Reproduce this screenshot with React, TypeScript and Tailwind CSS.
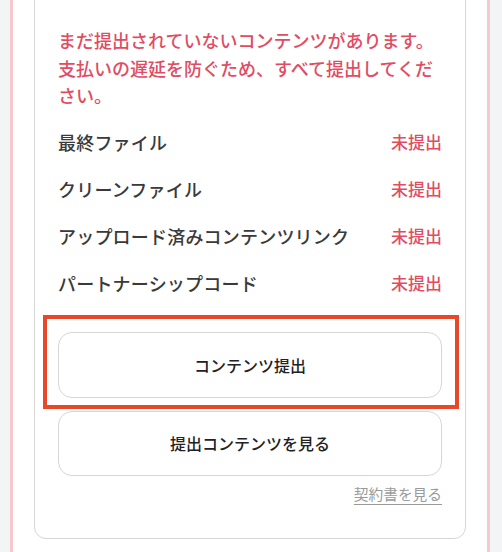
const items = [
  { label: "最終ファイル", status: "未提出" },
  { label: "クリーンファイル", status: "未提出" },
  { label: "アップロード済みコンテンツリンク", status: "未提出" },
  { label: "パートナーシップコード", status: "未提出" },
];

export default function App() {
  return (
    <div
      className="flex h-[552px] overflow-hidden bg-[#f3f4f6] pl-[10px] pr-[12px]"
      style={{ fontFamily: '"Noto Sans CJK JP", "Noto Sans", sans-serif' }}
    >
      <div className="flex w-full flex-col border-x-[3px] border-[#f5c9cd] bg-white px-[21px]">
        <div className="-mt-[20px] rounded-[12px] border border-[#d6d6d6] px-[23px] pt-[46px] pb-[33px]">
          <p className="text-[18px] leading-[27.5px] font-medium text-[#e14c62]">
            まだ提出されていないコンテンツがあります。支払いの遅延を防ぐため、すべて提出してください。
          </p>

          <ul className="mt-[9px]">
            {items.map((item) => (
              <li key={item.label} className="flex h-[47px] items-center justify-between">
                <span className="text-[18px] tracking-[0.2px] font-medium text-[#3a3a3a]">{item.label}</span>
                <span className="text-[17px] font-medium text-[#e14c62]">{item.status}</span>
              </li>
            ))}
          </ul>

          <div className="relative mt-[25px] flex flex-col gap-[13px]">
            <button className="h-[66px] rounded-[14px] border border-[#d6d6d6] bg-white text-[16px] font-medium text-[#222]">
              コンテンツ提出
            </button>
            <div className="pointer-events-none absolute top-[-17px] left-[-15px] right-[-17px] h-[94px] border-4 border-[#e8472a]" />
            <button className="h-[65px] rounded-[14px] border border-[#d6d6d6] bg-white text-[16px] font-medium text-[#222]">
              提出コンテンツを見る
            </button>
          </div>

          <div className="mt-[7px] flex justify-end">
            <a href="#" className="text-[14.7px] text-[#9a9a9a] underline underline-offset-[4px]">
              契約書を見る
            </a>
          </div>
        </div>
      </div>
    </div>
  );
}
